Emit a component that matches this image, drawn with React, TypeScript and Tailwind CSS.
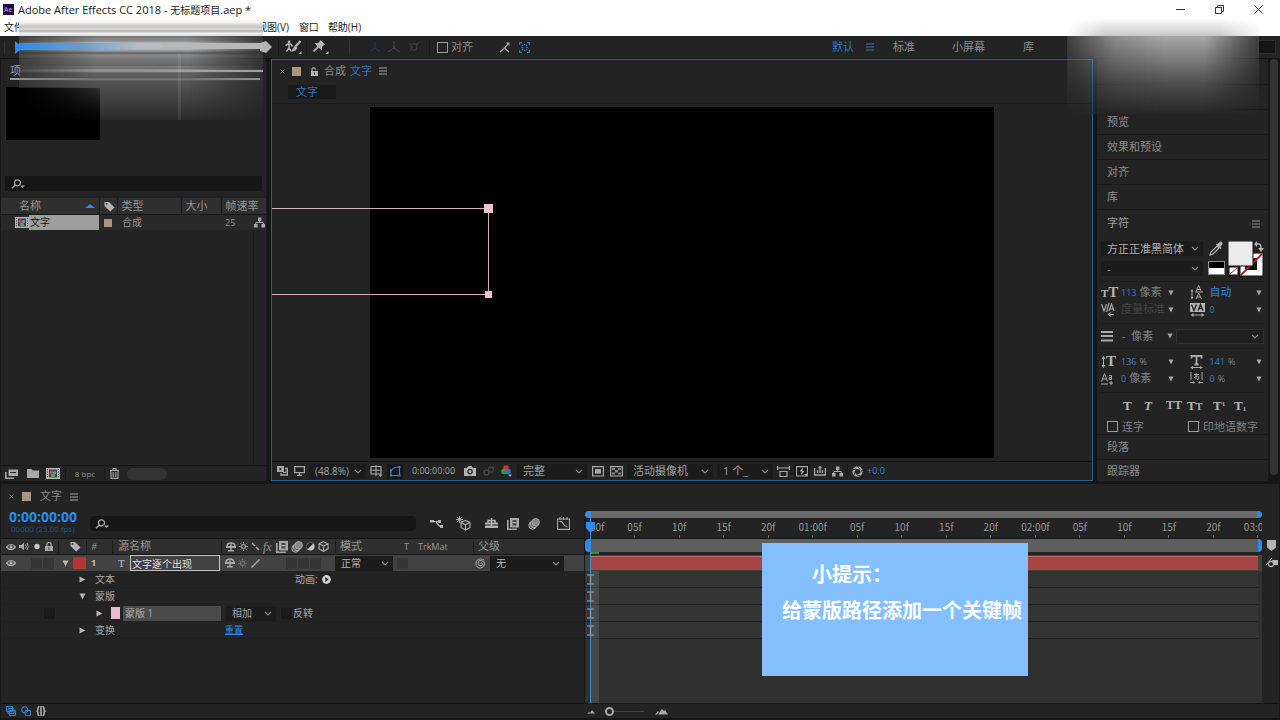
import React from "react";
import clsx from "clsx";
import { twMerge } from "tailwind-merge";

type IconProps = {
  w?: number;
  h?: number;
  className?: string;
  children: React.ReactNode;
};

const Icon = ({ w = 12, h = 12, className, children }: IconProps) => (
  <svg
    width={w}
    height={h}
    viewBox={`0 0 ${w} ${h}`}
    fill="none"
    className={twMerge("shrink-0 text-[#a8a8a8]", className)}
    aria-hidden="true"
  >
    {children}
  </svg>
);

const MenuIcon = ({ className }: { className?: string }) => (
  <Icon w={8} h={8} className={className}>
    <path d="M0 1h8M0 4h8M0 7h8" stroke="currentColor" strokeWidth="1.2" />
  </Icon>
);

const CloseIcon = () => (
  <Icon w={5} h={5} className="text-[#808080]">
    <path d="M0.5 0.5l4 4M4.5 0.5l-4 4" stroke="currentColor" />
  </Icon>
);

const SearchIcon = () => (
  <Icon w={15} h={10}>
    <circle cx="6.5" cy="3.8" r="3" stroke="currentColor" strokeWidth="1.2" />
    <path d="M4.3 6L1 9.3" stroke="currentColor" strokeWidth="1.4" />
    <path d="M9 6.5h5l-2.5 2.5z" fill="currentColor" />
  </Icon>
);

const TagIcon = () => (
  <Icon w={11} h={11} className="text-[#b4b4b4]">
    <path d="M0.5 1l4.5 0 5.5 5.5-4.3 4L0.5 5z" fill="currentColor" />
    <circle cx="2.6" cy="2.9" r="0.9" fill="#2f2f2f" />
  </Icon>
);

const TreeIcon = () => (
  <Icon w={11} h={11}>
    <path d="M4 0.5h3.4v3.4H4zM0 7h3.6v3.4H0zM7.4 7H11v3.4H7.4z" fill="currentColor" />
    <path d="M5.7 4v2M1.8 7.2V5.5h7.6v1.7" stroke="currentColor" />
  </Icon>
);

const CompIcon = () => (
  <Icon w={14} h={11}>
    <path d="M0 0h14v11H0z" fill="#b4b4b4" />
    <path d="M1.5 1v9M12.5 1v9" stroke="#4a4a4a" strokeDasharray="1.2 1.2" />
    <path d="M3 1.5h8v8H3z" fill="#39434d" />
    <circle cx="5.3" cy="4.2" r="1.7" fill="#c0504d" />
    <circle cx="8.6" cy="4.6" r="1.6" fill="#4f9ad0" />
    <path d="M5 6h4v3H5z" fill="#54a05a" />
  </Icon>
);

const ShyIcon = ({ className }: { className?: string }) => (
  <Icon w={10} h={10} className={className}>
    <path d="M1 4.500Q1 1 5 1t4 3.500" stroke="currentColor" strokeWidth="1.400" />
    <path d="M0 4h10v2H0zM2 8h6v1.500H2z" fill="currentColor" />
    <path d="M5 1v8" stroke="currentColor" strokeWidth="1.400" />
  </Icon>
);

const SunIcon = ({ className }: { className?: string }) => (
  <Icon w={9} h={9} className={className}>
    <circle cx="4.5" cy="4.5" r="2" stroke="currentColor" strokeWidth="1.2" />
    <path
      d="M4.5 0v1.6M4.5 7.4V9M0 4.5h1.6M7.4 4.5H9M1.4 1.400l1 1M6.600 6.600l1 1M1.400 7.600l1-1M6.600 2.400l1-1"
      stroke="currentColor"
    />
  </Icon>
);

const FrameBlendIcon = () => (
  <Icon w={12} h={12}>
    <path d="M3 0h9v9.500H3z" fill="currentColor" />
    <path d="M0.800 2v9.200h9" stroke="currentColor" strokeWidth="1.600" />
    <path d="M5.500 2h4v5.500h-4z" fill="#484848" />
    <path d="M5.500 4.700h4" stroke="#c0c0c0" />
  </Icon>
);

const MotionBlurIcon = () => (
  <Icon w={12} h={12}>
    <circle cx="4.5" cy="7.5" r="3.7" fill="#555" stroke="currentColor" />
    <circle cx="6" cy="6" r="3.7" fill="#666" stroke="currentColor" />
    <circle cx="7.7" cy="4.3" r="3.7" fill="#888" stroke="currentColor" />
  </Icon>
);

const CubeIcon = () => (
  <Icon w={11} h={11}>
    <path
      d="M5.5 0.7L10 2.8v5L5.5 10.3 1 7.8v-5zM1 2.8l4.5 2.3L10 2.8M5.5 5v5"
      stroke="currentColor"
      strokeWidth="1.2"
    />
  </Icon>
);

const EyeIcon = () => (
  <Icon w={10} h={8} className="text-[#b8b8b8]">
    <path d="M0.5 4Q5-1 9.5 4 5 9 0.5 4z" stroke="currentColor" strokeWidth="1.2" />
    <circle cx="5" cy="4" r="1.5" fill="currentColor" />
  </Icon>
);

const Twirl = ({ open = false }: { open?: boolean }) => (
  <Icon w={7} h={7} className="text-[#b4b4b4]">
    <path d={open ? "M0.5 0.5h6L3.5 6.5z" : "M0.5 0.5l6 3-6 3z"} fill="currentColor" />
  </Icon>
);

const IconButton = ({
  label,
  className,
  children,
}: {
  label: string;
  className?: string;
  children: React.ReactNode;
}) => (
  <button type="button" aria-label={label} className={clsx("flex shrink-0 items-center justify-center", className)}>
    {children}
  </button>
);

const Dropdown = ({
  label,
  value,
  className,
  selectClass,
}: {
  label: string;
  value: string;
  className?: string;
  selectClass?: string;
}) => (
  <label className={twMerge("flex h-[15px] shrink-0 items-center bg-[#1c1c1c] pr-1", className)}>
    <span className="sr-only">{label}</span>
    <select
      className={twMerge(
        "h-[19px] min-w-0 flex-1 appearance-none bg-transparent pl-[6px] leading-[19px] text-[#a0a0a0] outline-none",
        selectClass
      )}
    >
      <option>{value}</option>
    </select>
    <Icon w={8} h={5} className="text-[#8c8c8c]">
      <path d="M1 1l3 3 3-3" stroke="currentColor" strokeWidth="1.1" />
    </Icon>
  </label>
);

const Divider = ({ className }: { className?: string }) => (
  <div className={twMerge("w-px shrink-0 bg-[#1a1a1a]", className)} />
);

const TitleBar = () => (
  <header className="bg-white text-[#1a1a1a]">
    <div className="flex h-[19px] items-center">
      <Icon w={11} h={11} className="ml-[3px]">
        <path d="M0 0h11v11H0z" fill="#1f0a40" />
        <text x="1" y="8" fontSize="7" fill="#c9a6ff" fontFamily="Open Sans">
          Ae
        </text>
      </Icon>
      <h1 className="ml-1 flex-1 text-[11px] leading-4">
        Adobe After Effects CC 2018 - <span className="text-[10px]">无标题项目</span>.aep *
      </h1>
      <IconButton label="最小化" className="w-[39px]">
        <Icon w={9} h={9} className="text-[#333]">
          <path d="M0 4.5h9" stroke="currentColor" />
        </Icon>
      </IconButton>
      <IconButton label="还原" className="w-[39px]">
        <Icon w={9} h={9} className="text-[#333]">
          <path d="M0.5 2.5h6v6h-6zM2.5 2.5v-2h6v6h-2" stroke="currentColor" />
        </Icon>
      </IconButton>
      <IconButton label="关闭" className="mr-[2px] w-[39px]">
        <Icon w={9} h={9} className="text-[#333]">
          <path d="M0.5 0.5l8 8M8.5 0.5l-8 8" stroke="currentColor" />
        </Icon>
      </IconButton>
    </div>
    <nav className="flex h-[17px] items-center pl-1 text-[10px]">
      <button type="button">文件</button>
      <button type="button" className="ml-[233px]">视图(V)</button>
      <button type="button" className="ml-[10px]">窗口</button>
      <button type="button" className="ml-[9px]">帮助(H)</button>
    </nav>
  </header>
);

const workspaces = [
  { name: "默认", gap: "ml-[19px]", active: true },
  { name: "标准", gap: "ml-[19px]" },
  { name: "小屏幕", gap: "ml-[37px]" },
  { name: "库", gap: "ml-[38px]" },
];

const Toolbar = () => (
  <div className="flex h-[22px] items-center bg-[#232323] pl-1 text-[#8c8c8c]">
    <Divider className="h-3 bg-[#333]" />
    <Icon w={5} h={13} className="ml-[10px] text-[#2d8ceb]">
      <path d="M0 0l5 4v5l-5 4z" fill="currentColor" />
    </Icon>
    <Icon w={12} h={12} className="ml-[240px] text-[#b4b4b4]">
      <path d="M0 2l6-2 6 6-6 6-6-2z" fill="currentColor" />
    </Icon>
    <Divider className="ml-[6px] h-4" />
    <IconButton label="Roto 笔刷工具" className="ml-[6px]">
      <Icon w={17} h={14} className="text-[#b4b4b4]">
        <circle cx="4" cy="2" r="1.4" fill="currentColor" />
        <path d="M0.500 5.500l2.500-1.500h2.500l2 2.500M4 4v4l-2.500 3.500M4 8l2 3" stroke="currentColor" strokeWidth="1.500" />
        <path d="M15.5 1l-5 5.5" stroke="currentColor" strokeWidth="2.200" />
        <path d="M10 5.500L6 11.500q4 0.500 6.500-3.500z" fill="currentColor" />
        <path d="M16.5 11v3h-3z" fill="currentColor" />
      </Icon>
    </IconButton>
    <Divider className="ml-1 h-4" />
    <IconButton label="操控点工具" className="ml-[6px]">
      <Icon w={16} h={14} className="text-[#b4b4b4]">
        <path d="M7.5 0l4.500 4.500-1.500 1-1.500 1.500 0 3.500L5.800 7.700 1 12 0 11 4.300 6.200 1.500 3l3.500 0 1.500-1.500z" fill="currentColor" />
        <path d="M15.5 11v3h-3z" fill="currentColor" />
      </Icon>
    </IconButton>
    <Divider className="ml-[20px] h-4 bg-[#333]" />
    <div className="ml-[17px] flex h-4 w-4 items-center justify-center bg-[#1f232b]">
      <Icon w={12} h={12} className="text-[#2f3846]">
        <path d="M6 1v6L1 10.5M6 7l5 3.500" stroke="currentColor" />
      </Icon>
    </div>
    <Icon w={12} h={12} className="ml-[5px] text-[#434343]">
      <path d="M6 1v6L1 10.5M6 7l5 3.5" stroke="currentColor" />
      <path d="M6 5l2 3H4zM6 0l1.500 2h-3zM0 11l1-2 1.500 2zM12 11l-1-2-1.500 2z" fill="currentColor" />
    </Icon>
    <Icon w={12} h={12} className="ml-2 text-[#434343]">
      <path d="M1 2l3 4-2 4M3 3h6l-1 6-4 0M9 3l2-2" stroke="currentColor" />
    </Icon>
    <Divider className="ml-[9px] h-4" />
    <label className="ml-[7px] flex items-center text-[11px]">
      <input type="checkbox" className="mr-[3px] h-[11px] w-[11px] appearance-none border border-[#9c9c9c]" />
      对齐
    </label>
    <Icon w={11} h={11} className="ml-[26px]">
      <path d="M1 10L5.5 6 10 10M5 6.5L9 2" stroke="currentColor" strokeWidth="1.2" />
      <path d="M7 0.500h3.500v3.500z" fill="currentColor" />
    </Icon>
    <Icon w={11} h={11} className="ml-[9px] text-[#2f78bd]">
      <path
        d="M0.6 3V0.6H3M8 0.6h2.4V3M10.4 8v2.4H8M3 10.4H0.6V8M2 5.5h2M7 5.5h2M3 3l1 1M8 3L7 4M3 8l1-1M8 8L7 7M5.5 2v1.5M5.5 7.5V9"
        stroke="currentColor"
        strokeWidth="1.2"
      />
    </Icon>
    <div className="flex-1" />
    <nav className="flex w-[445px] items-center text-[11px]">
      {workspaces.map((w) => (
        <button key={w.name} type="button" className={clsx("flex items-center", w.gap, w.active && "text-[#2f78bd]")}>
          {w.name}
          {w.active && <MenuIcon className="ml-3 text-[#2f78bd]" />}
        </button>
      ))}
    </nav>
    <input type="search" aria-label="搜索帮助" className="mr-1 h-[14px] w-[18px] border border-[#2c2c2c] bg-[#161616]" />
  </div>
);

const ProjectPanel = () => (
  <section className="flex w-[267px] shrink-0 flex-col border-x border-[#1a1a1a] bg-[#232323]">
    <div className="h-[28px] pt-1">
      <button
        type="button"
        className="ml-[9px] block h-[17px] w-[250px] border-b-2 border-[#9c9c9c] text-left text-[11px] leading-[15px] text-[#a0a0a0]"
      >
        项
      </button>
    </div>
    <div className="ml-[5px] h-[53px] w-[94px] bg-black" />
    <label className="mx-1 mt-[36px] flex h-[15px] items-center bg-[#161616] pl-[6px]">
      <SearchIcon />
      <input type="search" aria-label="搜索项目" className="min-w-0 flex-1 bg-transparent text-[11px] outline-none" />
    </label>
    <table className="mt-[7px] w-full table-fixed border-collapse text-left text-[11px] leading-4 text-[#969696]">
      <colgroup>
        <col className="w-[98px]" />
        <col className="w-[18px]" />
        <col className="w-[64px]" />
        <col className="w-[40px]" />
        <col />
      </colgroup>
      <thead className="bg-[#2f2f2f]">
        <tr className="h-4 border-b border-[#161616]">
          <th className="border-r border-[#1c1c1c] p-0 font-normal">
            <span className="flex items-center pl-[18px]">
              名称
              <Icon w={10} h={4} className="mr-1 ml-auto text-[#2d8ceb]">
                <path d="M0 4l5-4 5 4z" fill="currentColor" />
              </Icon>
            </span>
          </th>
          <th className="border-r border-[#1c1c1c] p-0 pl-1" aria-label="标签">
            <TagIcon />
          </th>
          <th className="border-r border-[#1c1c1c] p-0 pl-1 font-normal">类型</th>
          <th className="border-r border-[#1c1c1c] p-0 pl-1 font-normal">大小</th>
          <th className="p-0 pl-1 font-normal">帧速率</th>
        </tr>
      </thead>
      <tbody>
        <tr className="h-[15px] bg-[#292929] text-[10px] leading-[15px]">
          <td className="p-0">
            <span className="flex items-center pl-[14px]">
              <CompIcon />
              <span className="flex-1 bg-[#9e9e9e] pl-px text-[#111]">文字</span>
            </span>
          </td>
          <td className="p-0 pl-[5px]">
            <div className="h-2 w-2 bg-[#a8977a]" />
          </td>
          <td className="p-0 pl-[5px]">合成</td>
          <td className="p-0" />
          <td className="p-0">
            <span className="flex items-center justify-between pr-px pl-1 text-[9px]">
              25
              <TreeIcon />
            </span>
          </td>
        </tr>
      </tbody>
    </table>
    <div className="mr-[12px] flex-1 border-r border-[#1a1a1a]" />
    <div className="flex h-[16px] items-center border-t border-[#161616] pl-1">
      <IconButton label="解释素材">
        <Icon w={13} h={10}>
          <path d="M3.5 0.5H13v6.500H3.5z" fill="currentColor" />
          <path d="M5 3.5h6" stroke="#222" />
          <path d="M0.8 3v6.2H9" stroke="currentColor" strokeWidth="1.6" />
        </Icon>
      </IconButton>
      <IconButton label="新建文件夹" className="ml-[9px]">
        <Icon w={12} h={9}>
          <path d="M0 0h4.5l1.5 1.5h6V9H0z" fill="currentColor" />
        </Icon>
      </IconButton>
      <IconButton label="新建合成" className="ml-[7px]">
        <CompIcon />
      </IconButton>
      <button type="button" className="ml-[5px] h-3 w-[40px] border-x border-[#191919] text-center text-[8px] leading-3 text-[#8c8c8c]">
        8 bpc
      </button>
      <IconButton label="删除" className="ml-[5px]">
        <Icon w={9} h={11}>
          <path d="M0 2.5h9M3 2V0.6h3V2M1 3v7.4h7V3M3.2 4v5M5.8 4v5" stroke="currentColor" strokeWidth="1.1" />
        </Icon>
      </IconButton>
      <div className="ml-2 h-3 w-[40px] rounded-full bg-[#333]" />
    </div>
  </section>
);

const PathHandle = ({ className }: { className?: string }) => (
  <span className={clsx("absolute bg-[#efc4d0]", className)} />
);

const CompositionPanel = () => (
  <section className="flex min-w-0 flex-1 flex-col border border-[#2c5f94] bg-[#232323]">
    <div className="flex h-[22px] items-center pl-2 text-[11px] text-[#8c8c8c]">
      <CloseIcon />
      <div className="ml-[7px] h-[9px] w-[9px] bg-[#a8977a]" />
      <Icon w={8} h={9} className="ml-[9px] text-[#b4b4b4]">
        <path d="M1 4h7v5H1z" fill="currentColor" />
        <path d="M2 4V2.5a1.7 1.7 0 0 1 3.4 0" stroke="currentColor" strokeWidth="1.2" />
        <path d="M4.5 5.5v2" stroke="#222" />
      </Icon>
      <span className="ml-[6px]">合成</span>
      <span className="ml-1 text-[#2f78bd]">文字</span>
      <MenuIcon className="ml-[7px]" />
    </div>
    <div className="h-[22px] border-b border-[#1a1a1a] pt-[3px] pl-4">
      <button type="button" className="block h-[14px] w-12 bg-[#191919] pl-2 text-left text-[11px] leading-[14px] text-[#2f78bd]">
        文字
      </button>
    </div>
    <div className="relative flex flex-1 items-center justify-center border-b border-[#111]">
      <div className="aspect-video w-[76%] bg-black" />
      <div className="absolute top-[104px] left-0 h-[87px] w-[217px] border-y border-r border-[#d9aebb]">
        <PathHandle className="-top-[5px] -right-[5px] h-[9px] w-[9px]" />
        <PathHandle className="-right-[4px] -bottom-[4px] h-[7px] w-[7px]" />
      </div>
    </div>
    <div className="flex h-[18px] items-center pl-[5px] text-[10px] text-[#a0a0a0]">
      <IconButton label="始终预览此视图">
        <Icon w={11} h={10}>
          <path d="M0 0h7v6H0z" fill="currentColor" />
          <path d="M2.5 1.5v3l2.5-1.5z" fill="#222" />
          <path d="M8 2.5h2.4v6.4H4V7" stroke="currentColor" strokeWidth="1.5" />
          <path d="M6 6.500h3v-2" stroke="currentColor" />
        </Icon>
      </IconButton>
      <IconButton label="主查看器" className="ml-[6px]">
        <Icon w={11} h={10}>
          <path d="M0.6 0.6h9.8v6H0.6zM5.5 7v2M3 9.4h5" stroke="currentColor" strokeWidth="1.2" />
        </Icon>
      </IconButton>
      <Dropdown label="放大率" value="(48.8%)" className="ml-1 w-[57px]" />
      <IconButton label="网格和参考线" className="ml-1">
        <Icon w={13} h={12}>
          <path d="M1 1.5h10v7.5H1zM6 0v11M0 5.3h12" stroke="currentColor" strokeWidth="1.1" />
          <path d="M8.5 9.5h4L10.5 12z" fill="currentColor" />
        </Icon>
      </IconButton>
      <IconButton label="切换蒙版和形状路径可见性" className="ml-1 h-[15px] w-4 bg-[#181818]">
        <Icon w={13} h={12} className="text-[#2f82d4]">
          <path d="M2 10.5V6Q4 2 10.5 2v8.5z" stroke="currentColor" strokeWidth="1.2" />
          <path d="M1 9.5h2v2H1zM9.5 9.5h2v2h-2zM9.5 1h2v2h-2zM1 4.5h2v2H1z" fill="currentColor" />
        </Icon>
      </IconButton>
      <span className="w-[61px] text-center text-[9px]">0:00:00:00</span>
      <IconButton label="拍摄快照">
        <Icon w={12} h={10} className="text-[#b4b4b4]">
          <path d="M0 2h3l1.5-2h3L9 2h3v8H0z" fill="currentColor" />
          <circle cx="6" cy="5.6" r="2.2" stroke="#222" strokeWidth="1.2" />
        </Icon>
      </IconButton>
      <Icon w={12} h={10} className="ml-[7px] text-[#484848]">
        <circle cx="3.5" cy="6.5" r="2.5" stroke="currentColor" strokeWidth="1.2" />
        <circle cx="8" cy="3.5" r="2.5" stroke="currentColor" strokeWidth="1.2" />
      </Icon>
      <IconButton label="显示通道" className="ml-[6px]">
        <Icon w={11} h={12}>
          <circle cx="5" cy="3" r="2.8" fill="#d93030" />
          <circle cx="3" cy="6.5" r="2.8" fill="#27a52f" />
          <circle cx="7" cy="6.5" r="2.8" fill="#2f6fe0" />
          <path d="M7 9.5h4l-2 2.5z" fill="currentColor" />
        </Icon>
      </IconButton>
      <Dropdown label="分辨率" value="完整" className="ml-[5px] w-[70px]" selectClass="text-[11px]" />
      <IconButton label="目标区域" className="ml-[5px]">
        <Icon w={12} h={11}>
          <path d="M0.6 0.6h10.8v9.4H0.6z" stroke="currentColor" strokeWidth="1.2" />
          <path d="M3 3h6v4.6H3z" fill="currentColor" />
        </Icon>
      </IconButton>
      <IconButton label="切换透明网格" className="ml-[6px]">
        <Icon w={13} h={11}>
          <path d="M0.6 0.6h11.8v9.4H0.6z" stroke="currentColor" strokeWidth="1.2" />
          <path d="M2 2h3v2H2zM8 2h3v2H8zM5 4h3v2.5H5zM2 6.500h3v2H2zM8 6.500h3v2H8z" fill="#888" />
        </Icon>
      </IconButton>
      <Dropdown label="3D 视图" value="活动摄像机" className="ml-1 w-[86px]" selectClass="text-[11px]" />
      <Dropdown label="视图布局" value="1 个_" className="ml-1 w-[56px]" selectClass="text-[11px]" />
      <IconButton label="像素长宽比校正" className="ml-1">
        <Icon w={13} h={11}>
          <path d="M0 2h13M0.6 0v4M12.4 0v4M3 5.5h7v5H3z" stroke="currentColor" strokeWidth="1.2" />
        </Icon>
      </IconButton>
      <IconButton label="快速预览" className="ml-1 h-[15px] w-4 bg-[#181818]">
        <Icon w={12} h={11}>
          <path d="M0.6 0.6h10.8v9.4H0.6z" stroke="currentColor" strokeWidth="1.1" />
          <path d="M7 1.5L3.5 5.5h2L5 9l3.5-4h-2z" fill="currentColor" />
          <path d="M8 8h4l-2 2.5z" fill="currentColor" />
        </Icon>
      </IconButton>
      <IconButton label="时间轴" className="ml-1">
        <Icon w={12} h={10}>
          <path d="M0.6 2v7h10.8V2M3.5 4v3M6 0v7M8.5 4v3M4.5 1.5h3" stroke="currentColor" strokeWidth="1.3" />
        </Icon>
      </IconButton>
      <IconButton label="合成流程图" className="ml-[6px]">
        <TreeIcon />
      </IconButton>
      <Divider className="ml-1 h-[14px]" />
      <IconButton label="重置曝光度" className="ml-1">
        <Icon w={11} h={11}>
          <circle cx="5.5" cy="5.5" r="3.9" stroke="currentColor" strokeWidth="2.6" />
          <path d="M5.5 0L8 3.5M10.5 4L7.5 7M8.5 10l-4-1.5M2 9.5L3 5.5M0 4l4-1" stroke="#232323" />
        </Icon>
      </IconButton>
      <span className="ml-1 text-[9px] text-[#2f82d4]">+0.0</span>
    </div>
  </section>
);

const Down = ({ className }: { className?: string }) => (
  <Icon w={6} h={6} className={className}>
    <path d="M0.5 0.5h5L3 5.5z" fill="currentColor" />
  </Icon>
);

const Field = ({
  icon,
  value,
  unit,
  label,
  valueClass = "text-[9px]",
}: {
  icon: React.ReactNode;
  value: string;
  unit?: string;
  label: string;
  valueClass?: string;
}) => (
  <div className="flex h-[17px] items-center pr-[2px]">
    <span className="flex w-[20px] items-center">{icon}</span>
    <button type="button" aria-label={label} className={clsx("text-[#2f82d4]", valueClass)}>
      {value}
    </button>
    {unit && <span className={clsx("ml-[3px] text-[#808080]", unit === "%" ? "text-[9px]" : "text-[11px]")}>{unit}</span>}
    <Down className="ml-auto" />
  </div>
);

const glyph = "font-['Liberation_Serif',serif] font-bold leading-none text-[#b4b4b4]";

const CharacterPanel = () => (
  <div className="border-b border-[#191919] text-[11px]">
    <div className="flex h-[27px] items-center justify-between pr-[8px] pl-[10px] text-[#a0a0a0]">
      字符
      <MenuIcon className="text-[#8c8c8c]" />
    </div>
    <div className="mx-[4px] mt-[4px] flex h-[41px] border-b border-[#1c1c1c]">
      <div className="flex w-[102px] flex-col gap-[5px]">
        <Dropdown label="字体" value="方正正准黑简体" selectClass="text-[#b0b0b0]" />
        <Dropdown label="字体样式" value="-" />
      </div>
      <div className="ml-1 flex w-[18px] flex-col items-center">
        <Icon w={14} h={15} className="text-[#b4b4b4]">
          <path d="M1 14l1-3 6-6 2 2-6 6z" stroke="currentColor" strokeWidth="1.2" />
          <path d="M7 3.5l4.5 4.5 1-1-1.2-1.2L13 4q1-1.5 0-2.8T10.5 1L8.7 3.2 8 2.5z" fill="currentColor" />
        </Icon>
        <div className="mt-[5px] h-[14px] w-[17px] border border-[#8c8c8c] bg-white">
          <div className="h-[6px] bg-black" />
        </div>
      </div>
      <Icon w={36} h={36} className="ml-[3px]">
        <path d="M12 12h23v23H12z" fill="#fff" stroke="#111" />
        <path d="M17 17h12v12H17z" fill="#111" />
        <path d="M12.5 34.5l22-22" stroke="#b0202a" strokeWidth="1.8" />
        <path d="M0 0h25v25H0z" fill="#ececec" stroke="#111" />
        <path d="M1 26h9v8H1z" fill="#fff" stroke="#111" />
        <path d="M1.5 33.5l8-7" stroke="#b0202a" />
        <path d="M28 3h3q2 0 2 5" stroke="#b4b4b4" strokeWidth="1.5" />
        <path d="M29 0v6l-3-3zM30 7h6l-3 4z" fill="#b4b4b4" />
      </Icon>
    </div>
    <div className="mx-1 grid grid-cols-2 gap-x-[14px] border-b border-[#1c1c1c] pt-[2px] pb-[5px]">
      <Field
        label="字体大小"
        value="113"
        unit="像素"
        icon={<span className={glyph}>T<span className="text-[15px]">T</span></span>}
      />
      <Field
        label="行距"
        value="自动"
        valueClass="text-[11px]"
        icon={
          <Icon w={14} h={15}>
            <path d="M6 6.5l2.7-6 2.7 6M7 4.5h3.5M6 14l2.7-6 2.7 6M7 12h3.5M5 7h8M2 5v8" stroke="currentColor" />
            <path d="M0.5 6.5h3L2 4zM0.5 12h3L2 14.5z" fill="currentColor" />
          </Icon>
        }
      />
      <div className="flex h-[17px] items-center pr-[2px]">
        <span className="flex w-[20px]">
          <Icon w={14} h={14}>
            <path d="M0.5 1l2.5 7 2.5-7M8 8l2.5-7L13 8M8.5 6h4M8 0L5.5 9M8 11.5h5" stroke="currentColor" strokeWidth="1.2" />
            <path d="M9.5 9v5L6.5 11.5z" fill="currentColor" />
          </Icon>
        </span>
        <button type="button" className="text-[#444]">度量标准</button>
        <Down className="ml-auto" />
      </div>
      <Field
        label="字符间距"
        value="0"
        icon={
          <Icon w={15} h={14}>
            <path d="M0 0h15v9H0z" fill="#b4b4b4" />
            <path d="M1.5 1.5L4 7.5l2.5-6M8 7.5l2.5-6 2.5 6M9 5.5h3" stroke="#222" strokeWidth="1.3" />
            <path d="M2 12h11" stroke="currentColor" />
            <path d="M0.5 12l3-2v4zM14.5 12l-3-2v4z" fill="currentColor" />
          </Icon>
        }
      />
    </div>
    <div className="mx-1 flex h-[25px] items-center border-b border-[#1c1c1c]">
      <Icon w={12} h={11}>
        <path d="M0 1h12M0 5h12M0 9.500h12" stroke="currentColor" strokeWidth="1.8" />
      </Icon>
      <button type="button" aria-label="描边宽度" className="ml-2 w-[46px] pl-px text-left text-[#808080]">
        -&nbsp; 像素
      </button>
      <Down />
      <Dropdown label="描边选项" value="" className="ml-[3px] flex-1 border border-[#303030] bg-[#202020]" />
    </div>
    <div className="mx-1 grid grid-cols-2 gap-x-[14px] border-b border-[#1c1c1c] pt-1 pb-[5px]">
      <Field
        label="垂直缩放"
        value="136"
        unit="%"
        icon={
          <span className={clsx(glyph, "flex items-center text-[15px]")}>
            <Icon w={5} h={12}>
              <path d="M2.5 1v10" stroke="currentColor" />
              <path d="M0.5 3h4L2.5 0zM0.5 9h4l-2 3z" fill="currentColor" />
            </Icon>
            T
          </span>
        }
      />
      <Field
        label="水平缩放"
        value="141"
        unit="%"
        icon={
          <Icon w={13} h={14}>
            <path d="M1.5 3.5V1h10v2.5M6.5 1v8.5M4.5 9.5h4" stroke="currentColor" strokeWidth="1.8" />
            <path d="M1 12.5h11" stroke="currentColor" />
            <path d="M0 12.5l3-1.5v3zM13 12.5L10 11v3z" fill="currentColor" />
          </Icon>
        }
      />
      <Field
        label="基线偏移"
        value="0"
        unit="像素"
        icon={
          <Icon w={13} h={12}>
            <path d="M0.5 8.5l3-8 3 8M1.5 6h4M0 11h7" stroke="currentColor" />
            <path d="M8 2.5h2.5v4H8.3v-2h2.2M10 8v4M8 10h4" stroke="currentColor" />
          </Icon>
        }
      />
      <Field
        label="比例间距"
        value="0"
        unit="%"
        icon={
          <Icon w={13} h={13}>
            <path d="M1 0v8M12 0v8M4 2.5h5M6 1v6.5M4 6q4-4 5 0 0 1.5-2 1.5" stroke="currentColor" />
            <path d="M0 10.5h4M13 10.5H9" stroke="currentColor" />
            <path d="M3 9l2 1.5L3 12zM10 9l-2 1.5 2 1.5z" fill="currentColor" />
          </Icon>
        }
      />
    </div>
    <div className={clsx("flex h-[24px] items-center pl-[26px] text-[13px]", glyph)}>
      <button type="button" aria-label="仿粗体" className="w-[21px] text-left font-black">T</button>
      <button type="button" aria-label="仿斜体" className="w-[22px] text-left italic">T</button>
      <button type="button" aria-label="全部大写" className="w-[21px] text-left text-[12px]">TT</button>
      <button type="button" aria-label="小型大写" className="w-[26px] text-left">T<span className="text-[10px]">T</span></button>
      <button type="button" aria-label="上标" className="w-[21px] text-left">T<sup className="text-[7px]">1</sup></button>
      <button type="button" aria-label="下标" className="text-left">T<sub className="text-[7px]">1</sub></button>
    </div>
    <div className="flex h-[17px] items-start overflow-hidden pt-[2px] pl-[10px] leading-[15px] text-[#808080]">
      <label className="flex w-[81px]">
        <input type="checkbox" className="mt-[2px] mr-[4px] h-[11px] w-[11px] appearance-none border border-[#9c9c9c]" />
        连字
      </label>
      <label className="flex">
        <input type="checkbox" className="mt-[2px] mr-[4px] h-[11px] w-[11px] appearance-none border border-[#9c9c9c]" />
        印地语数字
      </label>
    </div>
  </div>
);

const sidePanelRow = "flex h-[25px] w-full items-center border-b border-[#191919] pl-[10px] text-[11px] text-[#8c8c8c]";

const SidePanels = () => (
  <aside className="flex w-[183px] shrink-0 gap-[2px]">
    <div className="flex w-[171px] flex-col bg-[#232323]">
      <div className="h-[26px] border-b border-[#191919]" />
      <div className="h-[25px] border-b border-[#191919]" />
      {["预览", "效果和预设", "对齐", "库"].map((name) => (
        <button key={name} type="button" className={sidePanelRow}>
          {name}
        </button>
      ))}
      <CharacterPanel />
      <button type="button" className={sidePanelRow}>段落</button>
      <button type="button" className="flex w-full flex-1 items-center pl-[10px] text-[11px] leading-5 text-[#8c8c8c]">
        跟踪器
      </button>
    </div>
    <div className="mb-[6px] w-2 rounded-full bg-[#333]" />
  </aside>
);

const Box = ({ className }: { className?: string }) => <div className={clsx("h-[11px] w-[11px] bg-[#363636]", className)} />;

const propRow = "flex h-[17px] items-center border-b border-[#202020] text-[10px] text-[#a8a8a8]";

const LayerPane = () => (
  <div className="flex w-[583px] shrink-0 flex-col">
    <div className="flex h-[29px] items-center pl-[8px]">
      <h2 className="w-[72px] pb-1">
        <span className="block text-[14px] leading-[15px] font-bold text-[#2d8ceb]">0:00:00:00</span>
        <span className="block pl-[2px] text-[8px] leading-[10px] text-[#1f5385]">00000 (25.00 fps)</span>
      </h2>
      <label className="ml-[9px] flex h-[15px] w-[326px] items-center rounded-sm bg-[#161616] pl-[5px]">
        <SearchIcon />
        <input type="search" aria-label="搜索图层" className="min-w-0 flex-1 bg-transparent text-[11px] outline-none" />
      </label>
      <IconButton label="合成微型流程图" className="ml-[14px]">
        <Icon w={13} h={10} className="text-[#b4b4b4]">
          <path d="M0 1h4v2.500H0zM8 1h3v3H8zM10 6h3v3h-3z" fill="currentColor" />
          <path d="M3 2.500h7M6 3l4 4.500" stroke="currentColor" strokeWidth="1.200" />
        </Icon>
      </IconButton>
      <IconButton label="草图 3D" className="ml-[13px]">
        <Icon w={15} h={15}>
          <path d="M9.5 4.5l4.5 2v5l-4.5 2.5L5 11.5v-5zM5 6.5l4.5 2.3L14 6.5M9.5 9v5" stroke="currentColor" strokeWidth="1.2" />
          <path d="M3.5 0v7M0 3.5h7M1 1l5 5M6 1L1 6" stroke="currentColor" />
        </Icon>
      </IconButton>
      <IconButton label="隐藏图层" className="ml-[14px]">
        <Icon w={13} h={11} className="text-[#b4b4b4]">
          <path d="M3 5V2.500h7V5M6.500 0v9" stroke="currentColor" strokeWidth="1.500" />
          <path d="M0 4.500h13v2H0zM0 7.500h13V10H0z" fill="currentColor" />
        </Icon>
      </IconButton>
      <IconButton label="帧混合" className="ml-[9px]">
        <FrameBlendIcon />
      </IconButton>
      <IconButton label="运动模糊" className="ml-[9px]">
        <MotionBlurIcon />
      </IconButton>
      <IconButton label="图表编辑器" className="ml-[17px]">
        <Icon w={13} h={13}>
          <path d="M0.6 2h11.8v10.4H0.6zM2.5 4.5Q5 4 6 6.5T10.5 10M3 0v3M6.5 0v3M10 0v3" stroke="currentColor" strokeWidth="1.1" />
        </Icon>
      </IconButton>
    </div>
    <div className="flex h-[17px] items-center border-y border-[#161616] bg-[#2f2f2f] text-[11px] text-[#969696]">
      <div className="flex w-[57px] items-center gap-[3px] pl-[5px]">
        <EyeIcon />
        <Icon w={10} h={9}>
          <path d="M0 3h2.5L5 0.5v8L2.5 6H0z" fill="currentColor" />
          <path d="M6.5 2.5q1.5 2 0 4M8 1q2.5 3.5 0 7" stroke="currentColor" />
        </Icon>
        <Icon w={10} h={7} className="text-[#c4c4c4]">
          <circle cx="5" cy="3.5" r="2.7" fill="currentColor" />
        </Icon>
        <Icon w={8} h={9}>
          <path d="M0 4h8v5H0z" fill="currentColor" />
          <path d="M1.8 4V2.5a2.2 2 0 0 1 4.4 0V4" stroke="currentColor" strokeWidth="1.2" />
          <path d="M4 5.5v2" stroke="#222" />
        </Icon>
      </div>
      <Divider className="h-3" />
      <div className="w-[27px] pl-[11px]">
        <TagIcon />
      </div>
      <Divider className="h-3" />
      <span className="w-[25px] pl-1 text-[9px] italic">#</span>
      <Divider className="h-3" />
      <span className="w-[108px] pl-[5px]">源名称</span>
      <Divider className="h-3" />
      <div className="flex w-[113px] items-center gap-[3px] pl-1">
        <ShyIcon />
        <SunIcon />
        <Icon w={9} h={9}>
          <path d="M1 1l3 3M5 5l3 3" stroke="currentColor" strokeWidth="1.5" />
        </Icon>
        <span className="w-[10px] font-['Liberation_Serif',serif] text-[12px] leading-none italic">fx</span>
        <FrameBlendIcon />
        <MotionBlurIcon />
        <Icon w={9} h={9}>
          <circle cx="4.5" cy="4.5" r="4" fill="#c4c4c4" />
          <path d="M1.8 7A3.5 3.5 0 0 1 7 1.8z" fill="#222" />
        </Icon>
        <CubeIcon />
      </div>
      <Divider className="h-3" />
      <span className="w-[68px] pl-1">模式</span>
      <span className="w-[14px] text-[9px]">T</span>
      <span className="w-[55px] text-[9px]">TrkMat</span>
      <Divider className="h-3" />
      <span className="flex-1 pl-1">父级</span>
    </div>
    <div className="flex h-[16px] items-center bg-[#424242] text-[10px] text-[#c0c0c0]">
      <IconButton label="显示图层" className="ml-[5px]">
        <EyeIcon />
      </IconButton>
      <Box className="ml-[15px]" />
      <Box className="ml-px" />
      <span className="ml-[8px]">
        <Twirl open />
      </span>
      <div className="ml-[4px] h-3 w-[13px] bg-[#b83434]" />
      <span className="ml-[5px] w-[27px] text-[9px] font-bold">1</span>
      <span className="w-[12px] font-['Liberation_Serif',serif] text-[11px] leading-none">T</span>
      <input
        aria-label="图层名称"
        defaultValue="文字逐个出现"
        className="h-[16px] w-[90px] border border-[#c4c4c4] bg-[#424242] px-px text-[10px] leading-[14px] text-[#e0e0e0] outline-none"
      />
      <ShyIcon className="ml-[5px]" />
      <SunIcon className="ml-[3px] text-[#777]" />
      <Icon w={9} h={9} className="ml-[4px]">
        <path d="M0.5 8.5l8-8" stroke="currentColor" strokeWidth="1.4" />
      </Icon>
      <Box className="ml-[26px]" />
      <Box className="ml-px" />
      <Box className="ml-px" />
      <Dropdown label="混合模式" value="正常" className="ml-[14px] w-[58px]" selectClass="text-[10px] text-[#b4b4b4]" />
      <Box className="ml-[4px]" />
      <Icon w={11} h={11} className="ml-[67px]">
        <path d="M5.5 5.5q1-1.5 2 0t-1.5 2.3Q3 8 3.2 5T6 2.5Q9.5 2.5 9.5 6T5.5 10Q1 10 1 5.5T5.5 1Q8 1 9 2" stroke="currentColor" />
      </Icon>
      <Dropdown label="父级" value="无" className="ml-[4px] w-[74px]" selectClass="text-[10px] text-[#b4b4b4]" />
    </div>
    <div className={propRow}>
      <span className="ml-[78px] flex w-4 items-center"><Twirl /></span>
      <span className="w-[200px]">文本</span>
      动画:
      <IconButton label="添加动画" className="ml-1">
        <Icon w={9} h={9}>
          <circle cx="4.5" cy="4.5" r="4.4" fill="#d0d0d0" />
          <path d="M3.3 2l3.2 2.5L3.3 7z" fill="#222" />
        </Icon>
      </IconButton>
    </div>
    <div className={propRow}>
      <span className="ml-[78px] flex w-4 items-center"><Twirl open /></span>
      蒙版
    </div>
    <div className={propRow}>
      <div className="ml-[43px] h-[11px] w-[11px] bg-[#1a1a1a]" />
      <span className="ml-[41px] flex w-[15px] items-center"><Twirl /></span>
      <div className="h-3 w-[9px] bg-[#e5bccb]" />
      <span className="ml-[3px] h-[15px] w-[98px] bg-[#4a4a4a] pl-[2px] leading-[15px]">蒙版 1</span>
      <Dropdown label="蒙版模式" value="相加" className="ml-[5px] w-[50px]" selectClass="h-[17px] text-[10px] leading-[17px]" />
      <label className="flex items-center">
        <input type="checkbox" className="mr-px ml-[5px] h-[11px] w-[11px] appearance-none bg-[#1a1a1a]" />
        反转
      </label>
    </div>
    <div className={propRow}>
      <span className="ml-[78px] flex w-4 items-center"><Twirl /></span>
      <span className="w-[130px]">变换</span>
      <a href="#reset" className="text-[9px] leading-[14px] text-[#2d8ceb] underline">重置</a>
    </div>
  </div>
);

const ticks = ["00f", "05f", "10f", "15f", "20f", "01:00f", "05f", "10f", "15f", "20f", "02:00f", "05f", "10f", "15f", "20f", "03:00f"];

const IBeam = () => (
  <Icon w={7} h={11} className="relative z-10 ml-[2px] text-[#8ea3b5]">
    <path d="M0 1h7M0 10h7M3.5 1v9" stroke="currentColor" strokeWidth="1.2" />
  </Icon>
);

const TrackPane = () => (
  <div className="relative flex min-w-0 flex-1 flex-col border-l border-[#161616]">
    <div className="flex h-[9px] items-center justify-between bg-[#232323] pt-[2px]">
      <div className="h-[7px] w-[5px] rounded-l-full bg-[#2d8ceb]" />
      <div className="h-[7px] flex-1 bg-[#6a6a6a]" />
      <div className="h-[7px] w-[5px] rounded-r-full bg-[#2d8ceb]" />
    </div>
    <div className="h-[20px] overflow-hidden">
      <div className="flex justify-between pr-[4px] pl-[5px]">
        {ticks.map((t, i) => (
          <div key={i} className="flex h-5 w-0 flex-col items-center justify-between">
            <span
              className={clsx(
                "font-['Noto_Sans_CJK_SC',sans-serif] text-[10px] leading-[17px] whitespace-nowrap text-[#969696]",
                i === 0 && "ml-[14px]"
              )}
            >
              {t}
            </span>
            <span className="h-[3px] w-px shrink-0 bg-[#6a6a6a]" />
          </div>
        ))}
      </div>
    </div>
    <div className="flex h-[14px] border-t border-[#161616]">
      <div className="w-[5px] rounded-l-sm bg-[#2d8ceb]" />
      <div className="flex-1 bg-[#5e5e5e]" />
      <div className="w-1 rounded-r-sm bg-[#2d8ceb]" />
    </div>
    <div className="h-[3px] pl-[5px]">
      <div className="h-[2px] w-[9px] bg-[#1fa32b]" />
    </div>
    <div className="flex h-[16px] bg-[#424242] pt-px pr-[4px] pb-px pl-[5px]">
      <div className="flex-1 border-t border-[#c06a6a] bg-[#a54545]" />
    </div>
    <div className="flex flex-1 flex-col bg-[#303030] pr-[4px]">
      {["文本", "蒙版", "蒙版 1", "变换"].map((row) => (
        <div key={row} className="flex h-[17px] items-center border-b border-[#222] bg-[#343434]">
          <IBeam />
        </div>
      ))}
    </div>
    {/* current time indicator */}
    <div className="absolute top-[62px] bottom-0 left-[5px] w-[9px] bg-[#ffffff1c]" />
    <div className="absolute top-[2px] bottom-0 left-[5px] w-px bg-[#3f8fd6]" />
    <Icon w={9} h={11} className="absolute top-[13px] left-[1px] text-[#2d8ceb]">
      <path d="M0 0h9v6L4.5 11 0 6z" fill="currentColor" />
    </Icon>
    <div className="absolute top-[34px] left-[177px] h-[133px] w-[266px] bg-[#84bfff] pt-[18px] pl-[20px] text-[20px] leading-[35px] font-bold whitespace-nowrap text-white">
      <p className="pl-[30px] leading-[28px]">小提示：</p>
      <p className="pt-[4px]">给蒙版路径添加一个关键帧</p>
    </div>
  </div>
);

const TimelinePanel = () => (
  <section className="flex shrink-0 flex-col border-x border-[#1a1a1a] bg-[#232323]">
    <div className="flex h-[25px] items-center pl-2 text-[11px] text-[#8c8c8c]">
      <CloseIcon />
      <div className="mr-[9px] ml-[8px] h-[9px] w-[9px] bg-[#a8977a]" />
      文字
      <MenuIcon className="ml-[8px]" />
    </div>
    <div className="flex h-[194px]">
      <LayerPane />
      <TrackPane />
      <div className="flex w-[17px] shrink-0 flex-col items-center gap-[7px] pt-[31px] pl-[2px]">
        <Icon w={9} h={11} className="text-[#b4b4b4]">
          <path d="M0 0h9v7.5L4.5 11 0 7.5z" fill="currentColor" />
        </Icon>
        <Icon w={12} h={10} className="text-[#b4b4b4]">
          <path d="M6 2h6v5H8z" fill="currentColor" />
          <circle cx="5" cy="6" r="2.6" stroke="currentColor" strokeWidth="1.2" />
          <path d="M0 7l6-7" stroke="currentColor" />
        </Icon>
      </div>
    </div>
    <div className="flex h-[15px] items-center border-t border-[#141414] pl-[5px]">
      <IconButton label="图层开关">
        <Icon w={10} h={10} className="text-[#2f82d4]">
          <path d="M0.5 0.5h6v5h-6zM2 2.5h6v5H2zM3.5 4.5h6v5h-6z" fill="#1c2c3c" stroke="currentColor" />
        </Icon>
      </IconButton>
      <IconButton label="转换控制" className="ml-[5px]">
        <Icon w={10} h={10} className="text-[#2f82d4]">
          <circle cx="3.8" cy="3.8" r="3" stroke="currentColor" strokeWidth="1.2" />
          <path d="M4.5 4.5h5v5h-5z" stroke="currentColor" />
        </Icon>
      </IconButton>
      <IconButton label="入点出点" className="ml-[5px]">
        <Icon w={10} h={10}>
          <path d="M3.5 0.5Q2 0.5 2 3T0.5 5Q2 5 2 7.5T3.5 9.5M6.5 0.5Q8 0.5 8 3t1.5 2Q8 5 8 7.5T6.5 9.5M5 0v10" stroke="currentColor" strokeWidth="1.6" />
        </Icon>
      </IconButton>
      <Icon w={8} h={5} className="ml-[541px]">
        <path d="M0 4.5l2-1.500 1 1 2-3L8 4.5z" fill="currentColor" />
      </Icon>
      <input
        type="range"
        aria-label="缩放时间轴"
        defaultValue={0}
        className="ml-[10px] h-[9px] w-[39px] appearance-none bg-[linear-gradient(#444,#444)] bg-[length:100%_1px] bg-center bg-no-repeat [&::-webkit-slider-thumb]:h-[9px] [&::-webkit-slider-thumb]:w-[9px] [&::-webkit-slider-thumb]:appearance-none [&::-webkit-slider-thumb]:rounded-full [&::-webkit-slider-thumb]:border-2 [&::-webkit-slider-thumb]:border-[#a8a8a8] [&::-webkit-slider-thumb]:bg-[#232323]"
      />
      <Icon w={13} h={7} className="ml-[11px]">
        <path d="M0 6.5L3 3l1 1L2 6.5zM3 6.5L7 1l2 2 1-1 3 4.5z" fill="currentColor" />
      </Icon>
    </div>
  </section>
);

// smeared patches covering the menu corner and the account area
const Smears = () => (
  <>
    <div className="pointer-events-none absolute top-[18px] left-[19px] z-20 w-[244px]">
      <div className="h-[18px] bg-[linear-gradient(#ffffff,#f2f2f2_25%,#c4c2c0_50%,#e0e0e0_62%,#b4b2b0_72%,#eeeeee_85%,#dddddd)]" />
      <div className="h-[84px] bg-[linear-gradient(#777,#8c8c8c_5px,#b8bcc0_7px,#b8bcc0_13px,#808080_16px,#606060_17px,#8a8a8a_19px,#747474_24px,#666_30px,#8a8a8a_31px,#646464_32px,#9a9a9a_34px,#9a9a9a_35px,#606060_37px,#5c5c5c_42px,#7c7c7c_43px,#565656_45px,#2a2a2a)] [mask-image:linear-gradient(to_right,#0005,#000_32%,#000_70%,#0003)]" />
      <div className="absolute top-[25px] left-0 h-[7px] w-[120px] bg-[linear-gradient(to_right,#2d8ceb,#5b9bdd_40%,#b8bcc000)]" />
      <div className="absolute top-[25px] right-0 h-[6px] w-[100px] bg-[#b8b8b8]" />
      <div className="absolute top-[52px] right-0 h-[2px] w-[120px] bg-[linear-gradient(to_right,#a0a0a000,#a0a0a0_40%)]" />
      <div className="absolute top-[70px] left-0 h-[32px] w-[81px] bg-[linear-gradient(#00000066,#000000f0)]" />
      <div className="absolute top-[70px] left-0 h-[32px] w-[81px] bg-[linear-gradient(to_right,#000,#00000000)]" />
      <div className="absolute top-[36px] right-[82px] h-[66px] w-[3px] bg-[#ffffff14]" />
    </div>
    <div className="pointer-events-none absolute top-[18px] right-[21px] z-20 w-[192px]">
      <div className="h-[18px] bg-[linear-gradient(#fff,#c8c8c8)] [mask-image:linear-gradient(to_right,#0000,#000_20%,#000_80%,#0002)]" />
      <div className="h-[78px] bg-[linear-gradient(#a8a8a8,#7c7c7c_30%,#4c4c4c_62%,#262626)] [mask-image:linear-gradient(to_right,#0003,#000c_25%,#000_50%,#000_72%,#0003)]" />
    </div>
  </>
);

const App = () => (
  <div className="relative flex min-h-screen flex-col overflow-hidden bg-[#161616] pb-[2px] font-['Open_Sans','Noto_Sans_CJK_SC',sans-serif]">
    <TitleBar />
    <Toolbar />
    <main className="flex flex-1 gap-1 pt-px pb-[3px]">
      <ProjectPanel />
      <CompositionPanel />
      <SidePanels />
    </main>
    <TimelinePanel />
    <Smears />
  </div>
);

export default App;
